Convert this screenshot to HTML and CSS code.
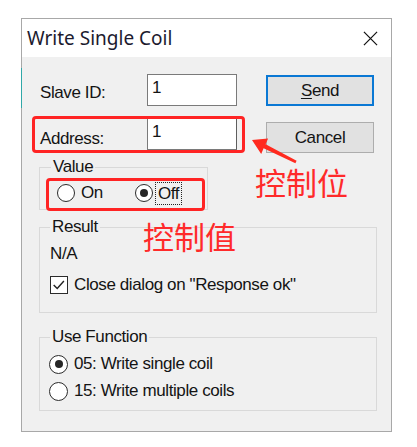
FILE: index.html
```html
<!DOCTYPE html>
<html lang="en">
<head>
<meta charset="utf-8">
<title>Write Single Coil</title>
<link rel="stylesheet" href="styles.css">
</head>
<body>
<div class="page">
  <div class="dialog">
    <div class="titlebar">
      <span class="title">Write Single Coil</span>
      <svg class="close" viewBox="0 0 16 16" width="16" height="16"><path d="M1 1 L15 15 M15 1 L1 15" stroke="#111" stroke-width="1.3" fill="none"/></svg>
    </div>
    <div class="content">
      <div class="top">
        <div class="fields">
          <div class="field"><span class="label">Slave ID:</span><div class="edit">1</div></div>
          <div class="field field-addr"><span class="label">Address:</span><div class="edit edit-addr">1</div></div>
        </div>
        <div class="buttons">
          <div class="btn btn-default"><u>S</u>end</div>
          <div class="btn">Cancel</div>
        </div>
      </div>
      <fieldset class="group group-value">
        <legend>Value</legend>
        <div class="inline-opts">
          <span class="opt opt-on"><span class="radio"></span><span>On</span></span>
          <span class="opt"><span class="radio checked"></span><span class="focus">Off</span></span>
        </div>
      </fieldset>
      <fieldset class="group group-result">
        <legend>Result</legend>
        <div class="na">N/A</div>
        <div class="opt check-row"><span class="checkbox"><svg viewBox="0 0 18 18" width="16" height="16"><path d="M3 9 L7 13 L14.5 4.5" stroke="#222" stroke-width="1.6" fill="none"/></svg></span><span>Close dialog on "Response ok"</span></div>
      </fieldset>
      <fieldset class="group group-func">
        <legend>Use Function</legend>
        <div class="opt func-opt"><span class="radio checked"></span><span>05: Write single coil</span></div>
        <div class="opt func-opt func-opt2"><span class="radio"></span><span>15: Write multiple coils</span></div>
      </fieldset>
    </div>
  </div>

  <div class="teal-edge"></div>
  <div class="mark mark-address"></div>
  <div class="mark mark-value"></div>
  <svg class="arrow" viewBox="0 0 52 34" width="52" height="34"><polygon points="4,8 20.1,6.6 17.6,12.3 48.6,28.8 47.4,31.2 15.6,16.3 13.2,22" fill="#ff2a1f"/></svg>
  <div class="note note-bit">控制位</div>
  <div class="note note-value">控制值</div>
</div>
</body>
</html>
```
FILE: styles.css
```css
html, body {
  margin: 0;
  padding: 0;
  background: #ffffff;
}

.page {
  position: relative;
  width: 417px;
  height: 447px;
  padding: 18px 0 0 21px;
  box-sizing: border-box;
}

.dialog {
  width: 371px;
  box-sizing: border-box;
  border: 1px solid #a8a8a8;
  background: #f0f0f0;
  font-family: "Liberation Sans", Arial, sans-serif;
  font-size: 17px;
  letter-spacing: -0.4px;
  line-height: 20px;
  color: #141414;
}

.titlebar {
  height: 38px;
  background: #ffffff;
  display: flex;
  align-items: center;
  justify-content: space-between;
  padding: 0 13px 0 5px;
  letter-spacing: 0;
}

.title {
  font-family: "Noto Sans", "Open Sans", sans-serif;
  font-size: 19px;
  color: #1c1a2e;
  line-height: 24px;
}

.close {
  width: 15px;
  height: 15px;
  margin-top: 1px;
}

.content {
  padding: 0 14px 20px 17px;
}

.top {
  display: flex;
  height: 96px;
}

.fields {
  display: flex;
  flex-direction: column;
  gap: 12px;
  padding-top: 17px;
  margin-left: 1px;
}

.field {
  display: flex;
  height: 32px;
}

.label {
  width: 107px;
  align-self: flex-end;
  margin-bottom: 3px;
}

.field-addr .label {
  margin-bottom: 1px;
}

.edit {
  width: 90px;
  height: 32px;
  box-sizing: border-box;
  background: #ffffff;
  border: 1px solid #7a7a7a;
  padding: 3px 0 0 4px;
}

.edit-addr {
  border-right-color: #5e5e5e;
}

.buttons {
  display: flex;
  flex-direction: column;
  gap: 16px;
  padding-top: 18px;
  margin-left: 29px;
}

.btn {
  width: 108px;
  height: 31px;
  box-sizing: border-box;
  background: #e1e1e1;
  border: 1px solid #adadad;
  display: flex;
  align-items: center;
  justify-content: center;
}

.btn-default {
  border: 2px solid #0a78d4;
}

.btn u {
  text-decoration-thickness: 1px;
  text-underline-offset: 2px;
}

.group {
  margin: 0;
  border: 1px solid #d9d9d9;
  padding: 0 0 0 10px;
  min-inline-size: 0;
}

.group legend {
  padding: 0 2px;
  line-height: 20px;
}

.group-value {
  width: 169px;
  box-sizing: border-box;
  margin-top: 4px;
  padding: 6px 0 6px 11px;
}

.group-result {
  margin-top: 7px;
  padding: 7px 0 17px 10px;
}

.group-func {
  margin-top: 14px;
  padding: 7px 0 9px 10px;
}

.inline-opts {
  display: flex;
  margin-left: 6px;
}

.opt {
  display: flex;
  align-items: center;
  gap: 6px;
  height: 20px;
}

.opt-on {
  width: 78px;
}

.radio {
  width: 18px;
  height: 18px;
  box-sizing: border-box;
  border: 1px solid #2b2b2b;
  border-radius: 50%;
  background: #ffffff;
  display: flex;
  align-items: center;
  justify-content: center;
  flex: none;
}

.radio.checked::after {
  content: "";
  width: 8px;
  height: 8px;
  border-radius: 50%;
  background: #262626;
}

.focus {
  outline: 1px dotted #222;
  outline-offset: 0;
  padding: 0 2px;
  margin-left: -3px;
  line-height: 21px;
}

.na {
  line-height: 20px;
}

.check-row {
  margin-top: 11px;
}

.checkbox {
  width: 18px;
  height: 18px;
  box-sizing: border-box;
  border: 1px solid #2b2b2b;
  background: #ffffff;
  display: flex;
  align-items: center;
  justify-content: center;
  flex: none;
}

.func-opt {
  margin-left: -1px;
}

.func-opt .radio {
  width: 19px;
  height: 19px;
}

.func-opt2 {
  margin-top: 7px;
}

/* annotations laid over the dialog */
.teal-edge {
  position: absolute;
  left: 21px;
  top: 68px;
  width: 1px;
  height: 40px;
  background: #30a8a8;
}

.mark {
  position: absolute;
  box-sizing: border-box;
  border: 3px solid #ff2424;
  border-radius: 4px;
}

.mark-address {
  left: 32px;
  top: 116px;
  width: 213px;
  height: 37px;
}

.mark-value {
  left: 46px;
  top: 178px;
  width: 159px;
  height: 33px;
}

.arrow {
  position: absolute;
  left: 248px;
  top: 132px;
}

.note {
  position: absolute;
  font-family: "Noto Sans CJK SC", "Noto Sans CJK JP", sans-serif;
  font-size: 31px;
  line-height: 31px;
  color: #ff2a2a;
  white-space: nowrap;
}

.note-bit {
  left: 255px;
  top: 166px;
}

.note-value {
  left: 143px;
  top: 220px;
}
```
